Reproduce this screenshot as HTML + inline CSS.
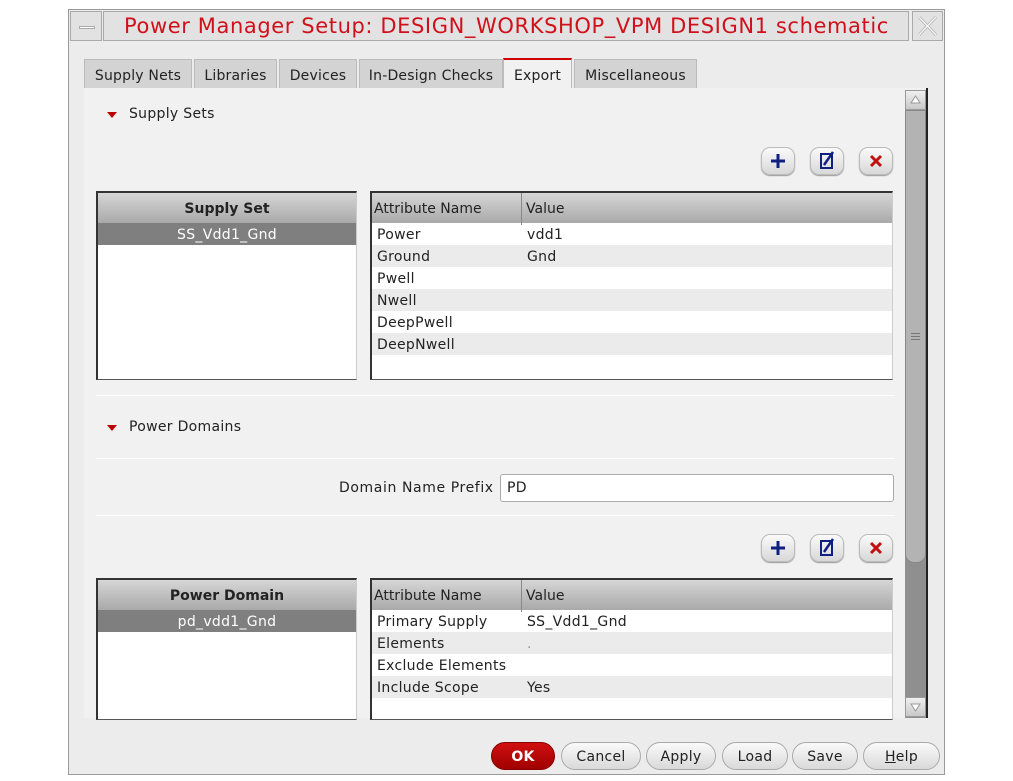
<!DOCTYPE html><html><head><style>
*{box-sizing:border-box;margin:0;padding:0}
body{width:1013px;height:781px;background:#fff;position:relative;overflow:hidden;font-family:"DejaVu Sans","Liberation Sans",sans-serif;font-size:14px;color:#222;letter-spacing:0.3px}
.a{position:absolute}
.win{left:68px;top:9px;width:877px;height:766px;border:1px solid #9a9a9a;background:#ececec}
.tb{background:#e2e2e2;border:1px solid #aaa;top:11px;height:30px}
.tab{top:59px;height:29px;background:#d3d3d3;border:1px solid #bbb;border-bottom:none;text-align:center;line-height:33px;font-size:14px;letter-spacing:0.2px}
.panel{left:84px;top:88px;width:844px;height:630px;background:#f1f1f1;border-right:2px solid #222}
.ib{width:34px;height:28px;border-radius:9px;background:linear-gradient(#fafafa,#d8d8d8);border:1px solid #bbb;box-shadow:0 1px 1px #999}
.tbl{background:#fff;border:2px solid #333;border-right:1px solid #ccc;border-bottom:1px solid #555}
.hdr{background:linear-gradient(#d6d6d6,#a9a9a9);height:30px;line-height:32px}
.row{height:22px;line-height:24px;padding-left:5px;position:relative}
.row.g{background:#ebebeb}
.row span{position:absolute;left:155px}
.line{height:1px;background:#aaa;border-bottom:1px solid #fff;left:96px;width:798px}
.tri{width:0;height:0;border-left:5px solid transparent;border-right:5px solid transparent;border-top:6px solid #b00}
.btn{top:742px;height:28px;border-radius:14px;background:linear-gradient(#fafafa,#d9d9d9);border:1px solid #aaa;text-align:center;line-height:29px;font-size:14px}
</style></head><body>
<div class="a win"></div>
<div class="a tb" style="left:70px;width:32px"><div class="a" style="left:8px;top:14px;width:16px;height:3px;background:#fff;border:1px solid #aaa"></div></div>
<div class="a tb" style="left:103px;width:806px;color:#d0101a;font-size:21px;line-height:28px;padding-left:20px;letter-spacing:0.6px;white-space:nowrap;overflow:hidden">Power Manager Setup: DESIGN_WORKSHOP_VPM DESIGN1 schematic</div>
<div class="a tb" style="left:912px;width:31px"><svg width="29" height="28"><path d="M6 5L23 23M23 5L6 23" stroke="#bbb" stroke-width="3"/><path d="M6 5L23 23M23 5L6 23" stroke="#fff" stroke-width="1"/></svg></div>
<div class="a tab" style="left:84px;width:108px">Supply Nets</div>
<div class="a tab" style="left:194px;width:83px">Libraries</div>
<div class="a tab" style="left:279px;width:78px">Devices</div>
<div class="a tab" style="left:359px;width:144px">In-Design Checks</div>
<div class="a tab" style="left:503px;width:69px;background:#f1f1f1;border-top:2px solid #c00;top:58px;height:30px">Export</div>
<div class="a tab" style="left:574px;width:123px">Miscellaneous</div>
<div class="a panel"></div>
<div class="a" style="left:905px;top:90px;width:21px;height:628px;background:#8f8f8f"></div>
<div class="a" style="left:905px;top:90px;width:21px;height:20px;background:linear-gradient(#f0f0f0,#c8c8c8);border:1px solid #999"><svg width="19" height="18"><path d="M5 12L9.5 5L14 12Z" fill="#fff" stroke="#999"/></svg></div>
<div class="a" style="left:905px;top:110px;width:21px;height:453px;background:#b3b3b3;border:1px solid #888;border-radius:0 0 9px 9px"></div>
<div class="a" style="left:911px;top:333px;width:9px;height:7px;border-top:1px solid #777;border-bottom:1px solid #777"><div style="margin-top:2px;height:1px;background:#777"></div></div>
<div class="a" style="left:905px;top:697px;width:21px;height:20px;background:linear-gradient(#f0f0f0,#c8c8c8);border:1px solid #999"><svg width="19" height="18"><path d="M5 6L9.5 13L14 6Z" fill="#fff" stroke="#999"/></svg></div>

<div class="a tri" style="left:107px;top:112px"></div>
<div class="a" style="left:129px;top:106px">Supply Sets</div>
<div class="a ib" style="left:761px;top:147px"><svg width="32" height="26"><path d="M16 6V20M9 13H23" stroke="#102080" stroke-width="3"/></svg></div>
<div class="a ib" style="left:810px;top:147px"><svg width="32" height="26"><rect x="10" y="6" width="11" height="14" fill="none" stroke="#102080" stroke-width="2"/><path d="M13 17L22 4" stroke="#102080" stroke-width="2.5"/></svg></div>
<div class="a ib" style="left:859px;top:147px"><svg width="32" height="26"><path d="M11 8L21 18M21 8L11 18" stroke="#c01010" stroke-width="3"/></svg></div>

<div class="a tbl" style="left:96px;top:191px;width:261px;height:189px">
<div class="hdr" style="text-align:center;font-weight:bold;letter-spacing:0">Supply Set</div>
<div class="row" style="background:#7f7f7f;color:#fff;text-align:center;padding:0">SS_Vdd1_Gnd</div></div>
<div class="a tbl" style="left:370px;top:191px;width:523px;height:189px">
<div class="hdr" style="padding-left:2px;position:relative;letter-spacing:0">Attribute Name<span style="position:absolute;left:149px;top:0;border-left:1px solid #888;padding-left:4px">Value</span></div>
<div class="row">Power<span>vdd1</span></div><div class="row g">Ground<span>Gnd</span></div>
<div class="row">Pwell</div><div class="row g">Nwell</div><div class="row">DeepPwell</div><div class="row g">DeepNwell</div></div>

<div class="a line" style="top:395px"></div>
<div class="a tri" style="left:107px;top:425px"></div>
<div class="a" style="left:129px;top:419px">Power Domains</div>
<div class="a line" style="top:458px"></div>
<div class="a" style="left:339px;top:480px;letter-spacing:0.6px">Domain Name Prefix</div>
<div class="a" style="left:500px;top:474px;width:394px;height:28px;background:#fff;border:1px solid #aaa;border-radius:3px;padding-left:6px;line-height:27px">PD</div>
<div class="a line" style="top:515px"></div>

<div class="a ib" style="left:761px;top:534px"><svg width="32" height="26"><path d="M16 6V20M9 13H23" stroke="#102080" stroke-width="3"/></svg></div>
<div class="a ib" style="left:810px;top:534px"><svg width="32" height="26"><rect x="10" y="6" width="11" height="14" fill="none" stroke="#102080" stroke-width="2"/><path d="M13 17L22 4" stroke="#102080" stroke-width="2.5"/></svg></div>
<div class="a ib" style="left:859px;top:534px"><svg width="32" height="26"><path d="M11 8L21 18M21 8L11 18" stroke="#c01010" stroke-width="3"/></svg></div>

<div class="a tbl" style="left:96px;top:578px;width:261px;height:142px">
<div class="hdr" style="text-align:center;font-weight:bold;letter-spacing:0">Power Domain</div>
<div class="row" style="background:#7f7f7f;color:#fff;text-align:center;padding:0">pd_vdd1_Gnd</div></div>
<div class="a tbl" style="left:370px;top:578px;width:523px;height:142px">
<div class="hdr" style="padding-left:2px;position:relative;letter-spacing:0">Attribute Name<span style="position:absolute;left:149px;top:0;border-left:1px solid #888;padding-left:4px">Value</span></div>
<div class="row">Primary Supply<span>SS_Vdd1_Gnd</span></div><div class="row g">Elements<span style="color:#999">.</span></div>
<div class="row">Exclude Elements</div><div class="row g">Include Scope<span>Yes</span></div></div>

<div class="a btn" style="left:491px;width:64px;background:linear-gradient(#d01010,#a00000);border-color:#800;color:#fff;font-weight:bold">OK</div>
<div class="a btn" style="left:561px;width:80px">Cancel</div>
<div class="a btn" style="left:646px;width:70px">Apply</div>
<div class="a btn" style="left:722px;width:66px">Load</div>
<div class="a btn" style="left:792px;width:66px">Save</div>
<div class="a btn" style="left:863px;width:77px"><u>H</u>elp</div>
</body></html>
